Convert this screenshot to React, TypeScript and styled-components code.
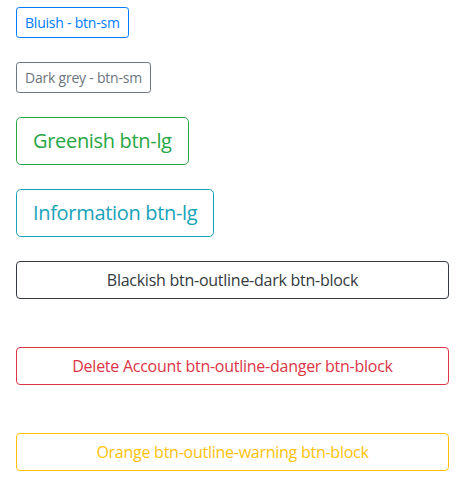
import React from "react";
import styled, { createGlobalStyle } from "styled-components";

const GlobalStyle = createGlobalStyle`
  html, body {
    margin: 0;
    padding: 0;
    background: #fff;
  }
  body {
    font-family: "Open Sans", "Noto Sans", Arial, sans-serif;
    color: #212529;
  }
`;

type Variant = "primary" | "secondary" | "success" | "info" | "dark" | "danger" | "warning";
type Size = "sm" | "md" | "lg";

const colors: Record<Variant, string> = {
  primary: "#007bff",
  secondary: "#6c757d",
  success: "#28a745",
  info: "#17a2b8",
  dark: "#343a40",
  danger: "#dc3545",
  warning: "#ffc107",
};

const sizes: Record<Size, { font: number; pad: string; radius: string }> = {
  sm: { font: 14, pad: "4px 8px", radius: "3.2px" },
  md: { font: 16, pad: "6px 12px", radius: "4px" },
  lg: { font: 20, pad: "8px 16px", radius: "4.8px" },
};

const Page = styled.div`
  padding: 7px 12px 16px 16px;
  display: flex;
  flex-direction: column;
  gap: 24px;
`;

const Group = styled.div<{ $gap: number }>`
  display: flex;
  flex-direction: column;
  align-items: flex-start;
  gap: ${(p) => p.$gap}px;
`;

const OutlineButton = styled.button<{ $variant: Variant; $size: Size; $block?: boolean }>`
  display: ${(p) => (p.$block ? "block" : "inline-block")};
  width: ${(p) => (p.$block ? "100%" : "auto")};
  box-sizing: border-box;
  font-family: inherit;
  font-weight: 400;
  font-size: ${(p) => sizes[p.$size].font}px;
  letter-spacing: -0.016em;
  line-height: 1.5;
  padding: ${(p) => sizes[p.$size].pad};
  border-radius: ${(p) => sizes[p.$size].radius};
  background: transparent;
  color: ${(p) => colors[p.$variant]};
  border: 1px solid ${(p) => colors[p.$variant]};
  text-align: center;
  white-space: nowrap;
  cursor: pointer;
`;

const App: React.FC = () => {
  return (
    <>
      <GlobalStyle />
      <Page>
        <Group $gap={24}>
          <OutlineButton $variant="primary" $size="sm">
            Bluish - btn-sm
          </OutlineButton>
          <OutlineButton $variant="secondary" $size="sm">
            Dark grey - btn-sm
          </OutlineButton>
          <OutlineButton $variant="success" $size="lg">
            Greenish btn-lg
          </OutlineButton>
          <OutlineButton $variant="info" $size="lg">
            Information btn-lg
          </OutlineButton>
        </Group>
        <Group $gap={48}>
          <OutlineButton $variant="dark" $size="md" $block>
            Blackish btn-outline-dark btn-block
          </OutlineButton>
          <OutlineButton $variant="danger" $size="md" $block>
            Delete Account btn-outline-danger btn-block
          </OutlineButton>
          <OutlineButton $variant="warning" $size="md" $block>
            Orange btn-outline-warning btn-block
          </OutlineButton>
        </Group>
      </Page>
    </>
  );
};

export default App;
